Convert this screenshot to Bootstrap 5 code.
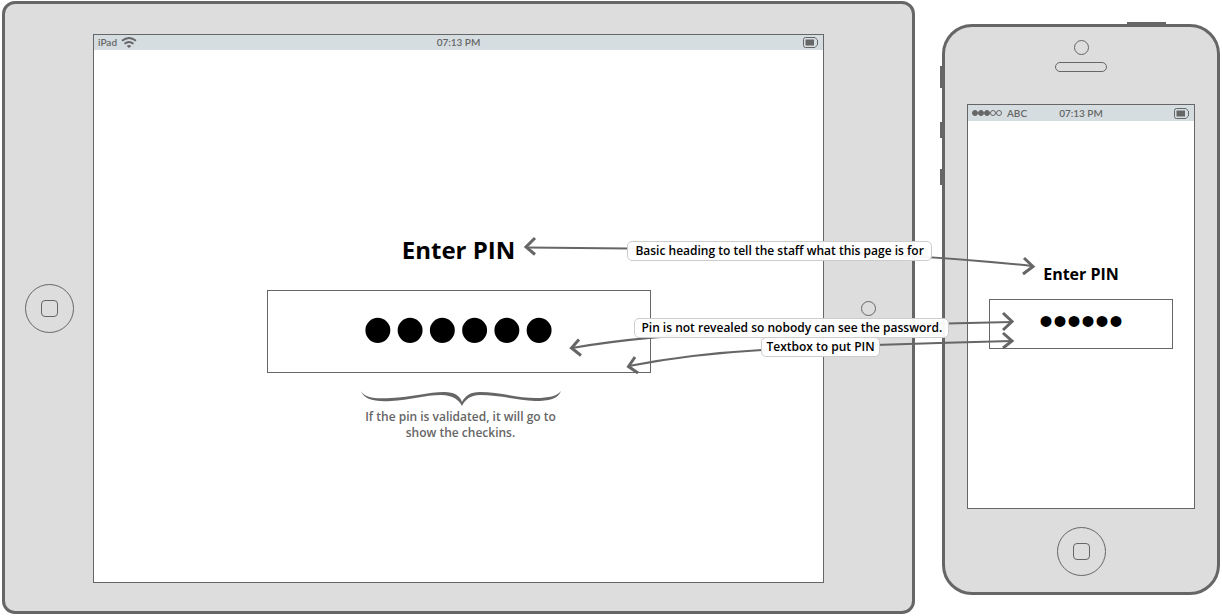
<!DOCTYPE html>
<html lang="en">
<head>
<meta charset="utf-8">
<meta name="viewport" content="width=device-width, initial-scale=1">
<title>Enter PIN wireframe</title>
<link href="https://cdn.jsdelivr.net/npm/bootstrap@5.3.0/dist/css/bootstrap.min.css" rel="stylesheet">
<style>
  :root { --ink: #666; --shell: #ddd; --bar: #d6dde1; }
  body { font-family: "Open Sans", "Noto Sans", sans-serif; font-size: 12px; line-height: 16px; color: #000; }
  .stage { padding: 1px 2px 2px; column-gap: 27px; }
  .device { background: var(--shell); border: 3px solid var(--ink); }
  .tablet { border-radius: 13px; padding: 30px 0 28px; min-width: 0; }
  .bezel { width: 88px; flex: none; }
  .tablet .screen { min-height: 549px; }
  .phone { width: 278px; flex: none; margin-top: 23px; border-radius: 30px; padding: 13px 22px 16px; }
  .phone .screen { min-height: 405px; margin: 32px 0 18px; }
  .screen { background: #fff; border: 1px solid var(--ink); min-width: 0; }
  .status { background: var(--bar); color: var(--ink); font: 600 10px/15px Lato, sans-serif; padding: 0 4px; }
  .phone .status { line-height: 16px; }
  .status > * { flex: 1 1 0; }
  .status > .clock { flex: none; }
  .round { border: 1px solid var(--ink); border-radius: 50%; background: none; }
  .lens { width: 15px; height: 15px; }
  .home { width: 49px; height: 49px; padding: 0; }
  .home span { width: 17px; height: 17px; border: 1px solid var(--ink); border-radius: 4px; }
  .speaker { width: 52px; height: 10px; border: 1px solid var(--ink); border-radius: 5px; margin-top: 7px; }
  .key { background: var(--ink); width: 3px; left: -5px; height: 16px; }
  .key-mute { top: 39px; height: 22px; }
  .key-up { top: 95px; }
  .key-down { top: 142px; }
  .key-power { top: -5px; left: auto; right: 51px; width: 39px; height: 3px; }
  .title { font-weight: 700; margin: 0; }
  .tablet .title { font-size: 24px; line-height: 30px; margin: 185px 0 25px; }
  .phone .title { font-size: 16px; line-height: 20px; margin: 143px 0 15px; }
  .pin { border: 1px solid var(--ink); border-radius: 0; background: #fff; color: #000; text-align: center; font-family: "Liberation Sans", sans-serif; padding: 0; max-width: 100%; }
  .tablet .pin { width: 384px; height: 83px; font-size: 92px; line-height: 76px; padding-bottom: 4px; }
  .phone .pin { width: 184px; height: 50px; font-size: 40px; line-height: 40px; padding-bottom: 6px; }
  .brace { width: 200px; height: 16px; margin-top: 18px; }
  .below { padding-left: 4px; }
  .hint { width: 200px; color: var(--ink); margin: 2px 0 0; font-weight: 600; }
  .notes { pointer-events: none; }
  .notes path { fill: none; stroke: var(--ink); stroke-width: 2; vector-effect: non-scaling-stroke; }
  .notes .tip { stroke-width: 3; }
  .note { height: 20px; line-height: 18px; border: 1px solid #ccc; border-radius: 5px; background: rgba(255,255,255,.95); font-weight: 600; white-space: nowrap; text-align: center; }
  .note-heading { left: 51.3%; width: 25%; top: 241px; }
  .note-secret { left: 51.9%; width: 25.8%; top: 318px; }
  .note-box { left: 62.3%; width: 9.7%; top: 337px; }
</style>
</head>
<body class="bg-white">
<main class="stage position-relative d-flex align-items-start">

  <section class="device tablet d-flex flex-grow-1" aria-label="Tablet">
    <div class="bezel d-flex align-items-center justify-content-center">
      <button type="button" class="home round d-flex align-items-center justify-content-center" aria-label="Home"><span></span></button>
    </div>
    <div class="screen flex-grow-1">
      <div class="status d-flex align-items-center">
        <div class="d-flex align-items-center gap-1">iPad
          <svg width="16" height="11" viewBox="0 0 16 11" fill="none" stroke="#666" stroke-width="1.800"><path d="M1 3.800Q8-1.800 15 3.800M3.500 6.800Q8 3.200 12.500 6.800"/><path d="M5.800 9Q8 7.200 10.200 9L8 11Z" fill="#666" stroke="none"/></svg>
        </div>
        <div class="clock">07:13 PM</div>
        <div class="d-flex justify-content-end">
          <svg width="16" height="11" viewBox="0 0 16 11"><path d="M2.500.5H12Q13 2 14.500 3V8Q13 9 12 10.500H2.500Q.5 10.500.5 8.500V2.500Q.5.500 2.500.5Z" fill="none" stroke="#666"/><path fill="#666" d="M2.500 2.500h8.500v6H2.500z"/></svg>
        </div>
      </div>
      <div class="d-flex flex-column align-items-center">
        <h1 class="title"><label for="pin-tablet">Enter PIN</label></h1>
        <input class="pin" id="pin-tablet" type="password" value="123456">
        <div class="below">
          <svg class="brace d-block" viewBox="0 0 200 16"><path fill="#666" d="M0 0C4 7 14 8 30 7C50 6 68 1 83 1C94 1 99 5 101 11C104 5 109 1 119 1C138 1 158 7 175 7C188 7 196 5 200 0C197 8 188 10 174 10C156 9 138 4 119 4C109 4 104 9 101 15C98 9 92 4 80 4C64 4 48 9 30 10C12 11 3 8 0 0Z"/></svg>
          <p class="hint text-center">If the pin is validated, it will go to show the checkins.</p>
        </div>
      </div>
    </div>
    <div class="bezel d-flex align-items-center justify-content-center">
      <span class="lens round"></span>
    </div>
  </section>

  <section class="device phone position-relative d-flex flex-column align-items-center" aria-label="Phone">
    <span class="key key-mute position-absolute"></span>
    <span class="key key-up position-absolute"></span>
    <span class="key key-down position-absolute"></span>
    <span class="key key-power position-absolute"></span>
    <span class="lens round"></span>
    <span class="speaker"></span>
    <div class="screen w-100">
      <div class="status d-flex align-items-center">
        <div class="d-flex align-items-center gap-1">
          <svg width="31" height="8" viewBox="0 0 31 8" fill="#666" stroke="#666"><circle cx="3" cy="4" r="2.500"/><circle cx="9" cy="4" r="2.500"/><circle cx="15" cy="4" r="2.500"/><circle cx="21" cy="4" r="2.500" fill="none"/><circle cx="27" cy="4" r="2.500" fill="none"/></svg>
          ABC
        </div>
        <div class="clock">07:13 PM</div>
        <div class="d-flex justify-content-end">
          <svg width="16" height="11" viewBox="0 0 16 11"><path d="M2.500.5H12Q13 2 14.500 3V8Q13 9 12 10.500H2.500Q.5 10.500.5 8.500V2.500Q.5.500 2.500.5Z" fill="none" stroke="#666"/><path fill="#666" d="M2.500 2.500h8.500v6H2.500z"/></svg>
        </div>
      </div>
      <div class="d-flex flex-column align-items-center">
        <h2 class="title"><label for="pin-phone">Enter PIN</label></h2>
        <input class="pin" id="pin-phone" type="password" value="123456">
      </div>
    </div>
    <button type="button" class="home round d-flex align-items-center justify-content-center" aria-label="Home"><span></span></button>
  </section>

  <div class="notes position-absolute top-0 start-0 w-100 h-100">
    <svg class="w-100 h-100 d-block" viewBox="0 0 1222 616" preserveAspectRatio="none" aria-hidden="true">
      <path d="M527 247.500L628 248.500C760 249 900 252 1032 266"/>
      <path class="tip" d="M535 238L526 247L535 254.500M1024 258L1033 266.500L1023 274"/>
      <path d="M572 348Q650 334 800 329Q900 324 1012 322"/>
      <path class="tip" d="M579 339.500L571.500 348L581 355.500M1003 313L1012 321.500L1003 330"/>
      <path d="M629 366Q690 354 762 350Q880 344 1012 341"/>
      <path class="tip" d="M635 357L628.500 366.500L638 373M1003 333L1012 341L1003 348"/>
    </svg>
    <div class="note note-heading position-absolute">Basic heading to tell the staff what this page is for</div>
    <div class="note note-secret position-absolute">Pin is not revealed so nobody can see the password.</div>
    <div class="note note-box position-absolute">Textbox to put PIN</div>
  </div>
</main>
<script src="https://cdn.jsdelivr.net/npm/bootstrap@5.3.0/dist/js/bootstrap.bundle.min.js"></script>
</body>
</html>
